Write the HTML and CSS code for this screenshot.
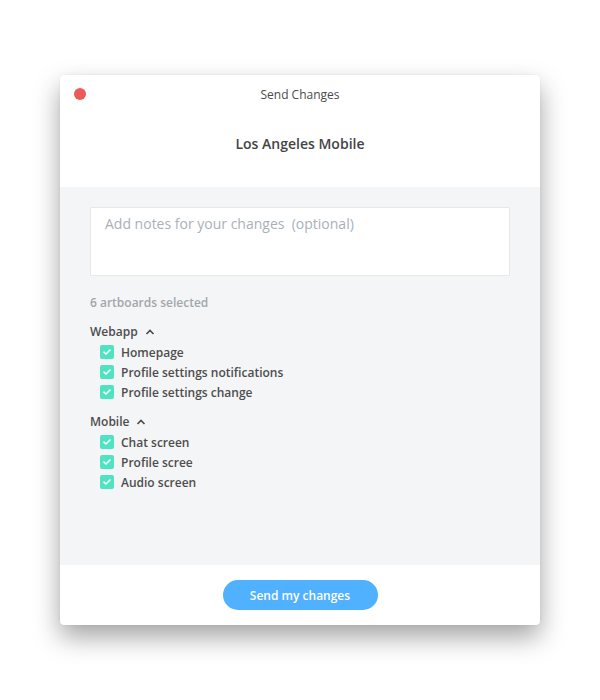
FILE: index.html
```html
<!DOCTYPE html>
<html>
<head>
<meta charset="utf-8">
<link rel="stylesheet" href="styles.css">
</head>
<body>
<div class="window">
  <header class="header">
    <span class="close-dot"></span>
    <div class="title">Send Changes</div>
    <div class="project">Los Angeles Mobile</div>
  </header>
  <main class="content">
    <textarea class="notes" placeholder="Add notes for your changes  (optional)"></textarea>
    <div class="count">6 artboards selected</div>
    <section class="group">
      <div class="group-title">Webapp <svg class="chev" width="10" height="6" viewBox="0 0 10 6"><path d="M1.5 5 L5 1.5 L8.5 5" fill="none" stroke="#4a4a4a" stroke-width="1.6"/></svg></div>
      <ul class="items">
        <li class="item"><span class="check"><svg width="14" height="14" viewBox="0 0 14 14"><path d="M4 7.2 L6 9 L10 5" fill="none" stroke="#fff" stroke-width="1.6" stroke-linecap="round" stroke-linejoin="round"/></svg></span>Homepage</li>
        <li class="item"><span class="check"><svg width="14" height="14" viewBox="0 0 14 14"><path d="M4 7.2 L6 9 L10 5" fill="none" stroke="#fff" stroke-width="1.6" stroke-linecap="round" stroke-linejoin="round"/></svg></span>Profile settings notifications</li>
        <li class="item"><span class="check"><svg width="14" height="14" viewBox="0 0 14 14"><path d="M4 7.2 L6 9 L10 5" fill="none" stroke="#fff" stroke-width="1.6" stroke-linecap="round" stroke-linejoin="round"/></svg></span>Profile settings change</li>
      </ul>
    </section>
    <section class="group group-2">
      <div class="group-title">Mobile <svg class="chev" width="10" height="6" viewBox="0 0 10 6"><path d="M1.5 5 L5 1.5 L8.5 5" fill="none" stroke="#4a4a4a" stroke-width="1.6"/></svg></div>
      <ul class="items">
        <li class="item"><span class="check"><svg width="14" height="14" viewBox="0 0 14 14"><path d="M4 7.2 L6 9 L10 5" fill="none" stroke="#fff" stroke-width="1.6" stroke-linecap="round" stroke-linejoin="round"/></svg></span>Chat screen</li>
        <li class="item"><span class="check"><svg width="14" height="14" viewBox="0 0 14 14"><path d="M4 7.2 L6 9 L10 5" fill="none" stroke="#fff" stroke-width="1.6" stroke-linecap="round" stroke-linejoin="round"/></svg></span>Profile scree</li>
        <li class="item"><span class="check"><svg width="14" height="14" viewBox="0 0 14 14"><path d="M4 7.2 L6 9 L10 5" fill="none" stroke="#fff" stroke-width="1.6" stroke-linecap="round" stroke-linejoin="round"/></svg></span>Audio screen</li>
      </ul>
    </section>
  </main>
  <footer class="footer">
    <button class="send">Send my changes</button>
  </footer>
</div>
</body>
</html>
```
FILE: styles.css
```css
html, body {
  margin: 0;
  padding: 0;
  background: #ffffff;
}
body {
  font-family: "Open Sans", "Liberation Sans", sans-serif;
  color: #4a4a4a;
  padding: 75px 60px 0 60px;
  min-height: 700px;
  box-sizing: border-box;
}
.window {
  width: 480px;
  height: 550px;
  background: #ffffff;
  border-radius: 4px;
  box-shadow: 0 12px 26px rgba(0, 0, 0, 0.36), 0 0 2px rgba(0, 0, 0, 0.08);
  display: flex;
  flex-direction: column;
  overflow: hidden;
}
.header {
  position: relative;
  height: 112px;
  box-sizing: border-box;
  padding-top: 11px;
  text-align: center;
}
.close-dot {
  position: absolute;
  left: 14px;
  top: 13px;
  width: 12px;
  height: 12px;
  border-radius: 50%;
  background: #ec5a5a;
}
.title {
  font-size: 12px;
  line-height: 18px;
  color: #4a4a4a;
}
.project {
  margin-top: 30px;
  font-size: 14px;
  font-weight: 600;
  line-height: 20px;
  color: #444444;
}
.content {
  flex: 1;
  background: #f4f5f7;
  padding: 20px 30px;
}
.notes {
  display: block;
  width: 420px;
  height: 69px;
  box-sizing: border-box;
  margin: 0;
  border: 1px solid #e6e8eb;
  border-radius: 1px;
  background: #fff;
  padding: 6px 14px;
  font-family: "Open Sans", "Liberation Sans", sans-serif;
  font-size: 14px;
  line-height: 20px;
  color: #4a4a4a;
  resize: none;
  outline: none;
}
.notes::placeholder {
  color: #a9b1b8;
  white-space: pre;
}
.count {
  margin-top: 19px;
  font-size: 12px;
  font-weight: 600;
  line-height: 16px;
  color: #a2a7ac;
}
.group {
  margin-top: 11px;
}
.group-2 {
  margin-top: 10px;
}
.group-title {
  font-size: 12px;
  font-weight: 600;
  line-height: 20px;
  color: #4d4d4d;
  display: flex;
  align-items: center;
  gap: 7px;
}
.chev {
  display: block;
}
.items {
  list-style: none;
  margin: 0;
  padding: 0 0 0 10px;
}
.item {
  display: flex;
  align-items: center;
  height: 20px;
  font-size: 12px;
  font-weight: 600;
  color: #4d4d4d;
}
.check {
  width: 14px;
  height: 14px;
  border-radius: 2px;
  background: #50e3c2;
  margin-right: 7px;
  display: flex;
}
.footer {
  height: 60px;
  box-sizing: border-box;
  padding-top: 15px;
  display: flex;
  justify-content: center;
}
.send {
  width: 155px;
  height: 30px;
  border: none;
  border-radius: 15px;
  background: #4fb1ff;
  color: #ffffff;
  font-family: "Open Sans", "Liberation Sans", sans-serif;
  font-size: 12px;
  font-weight: 600;
  padding: 0;
}
```
